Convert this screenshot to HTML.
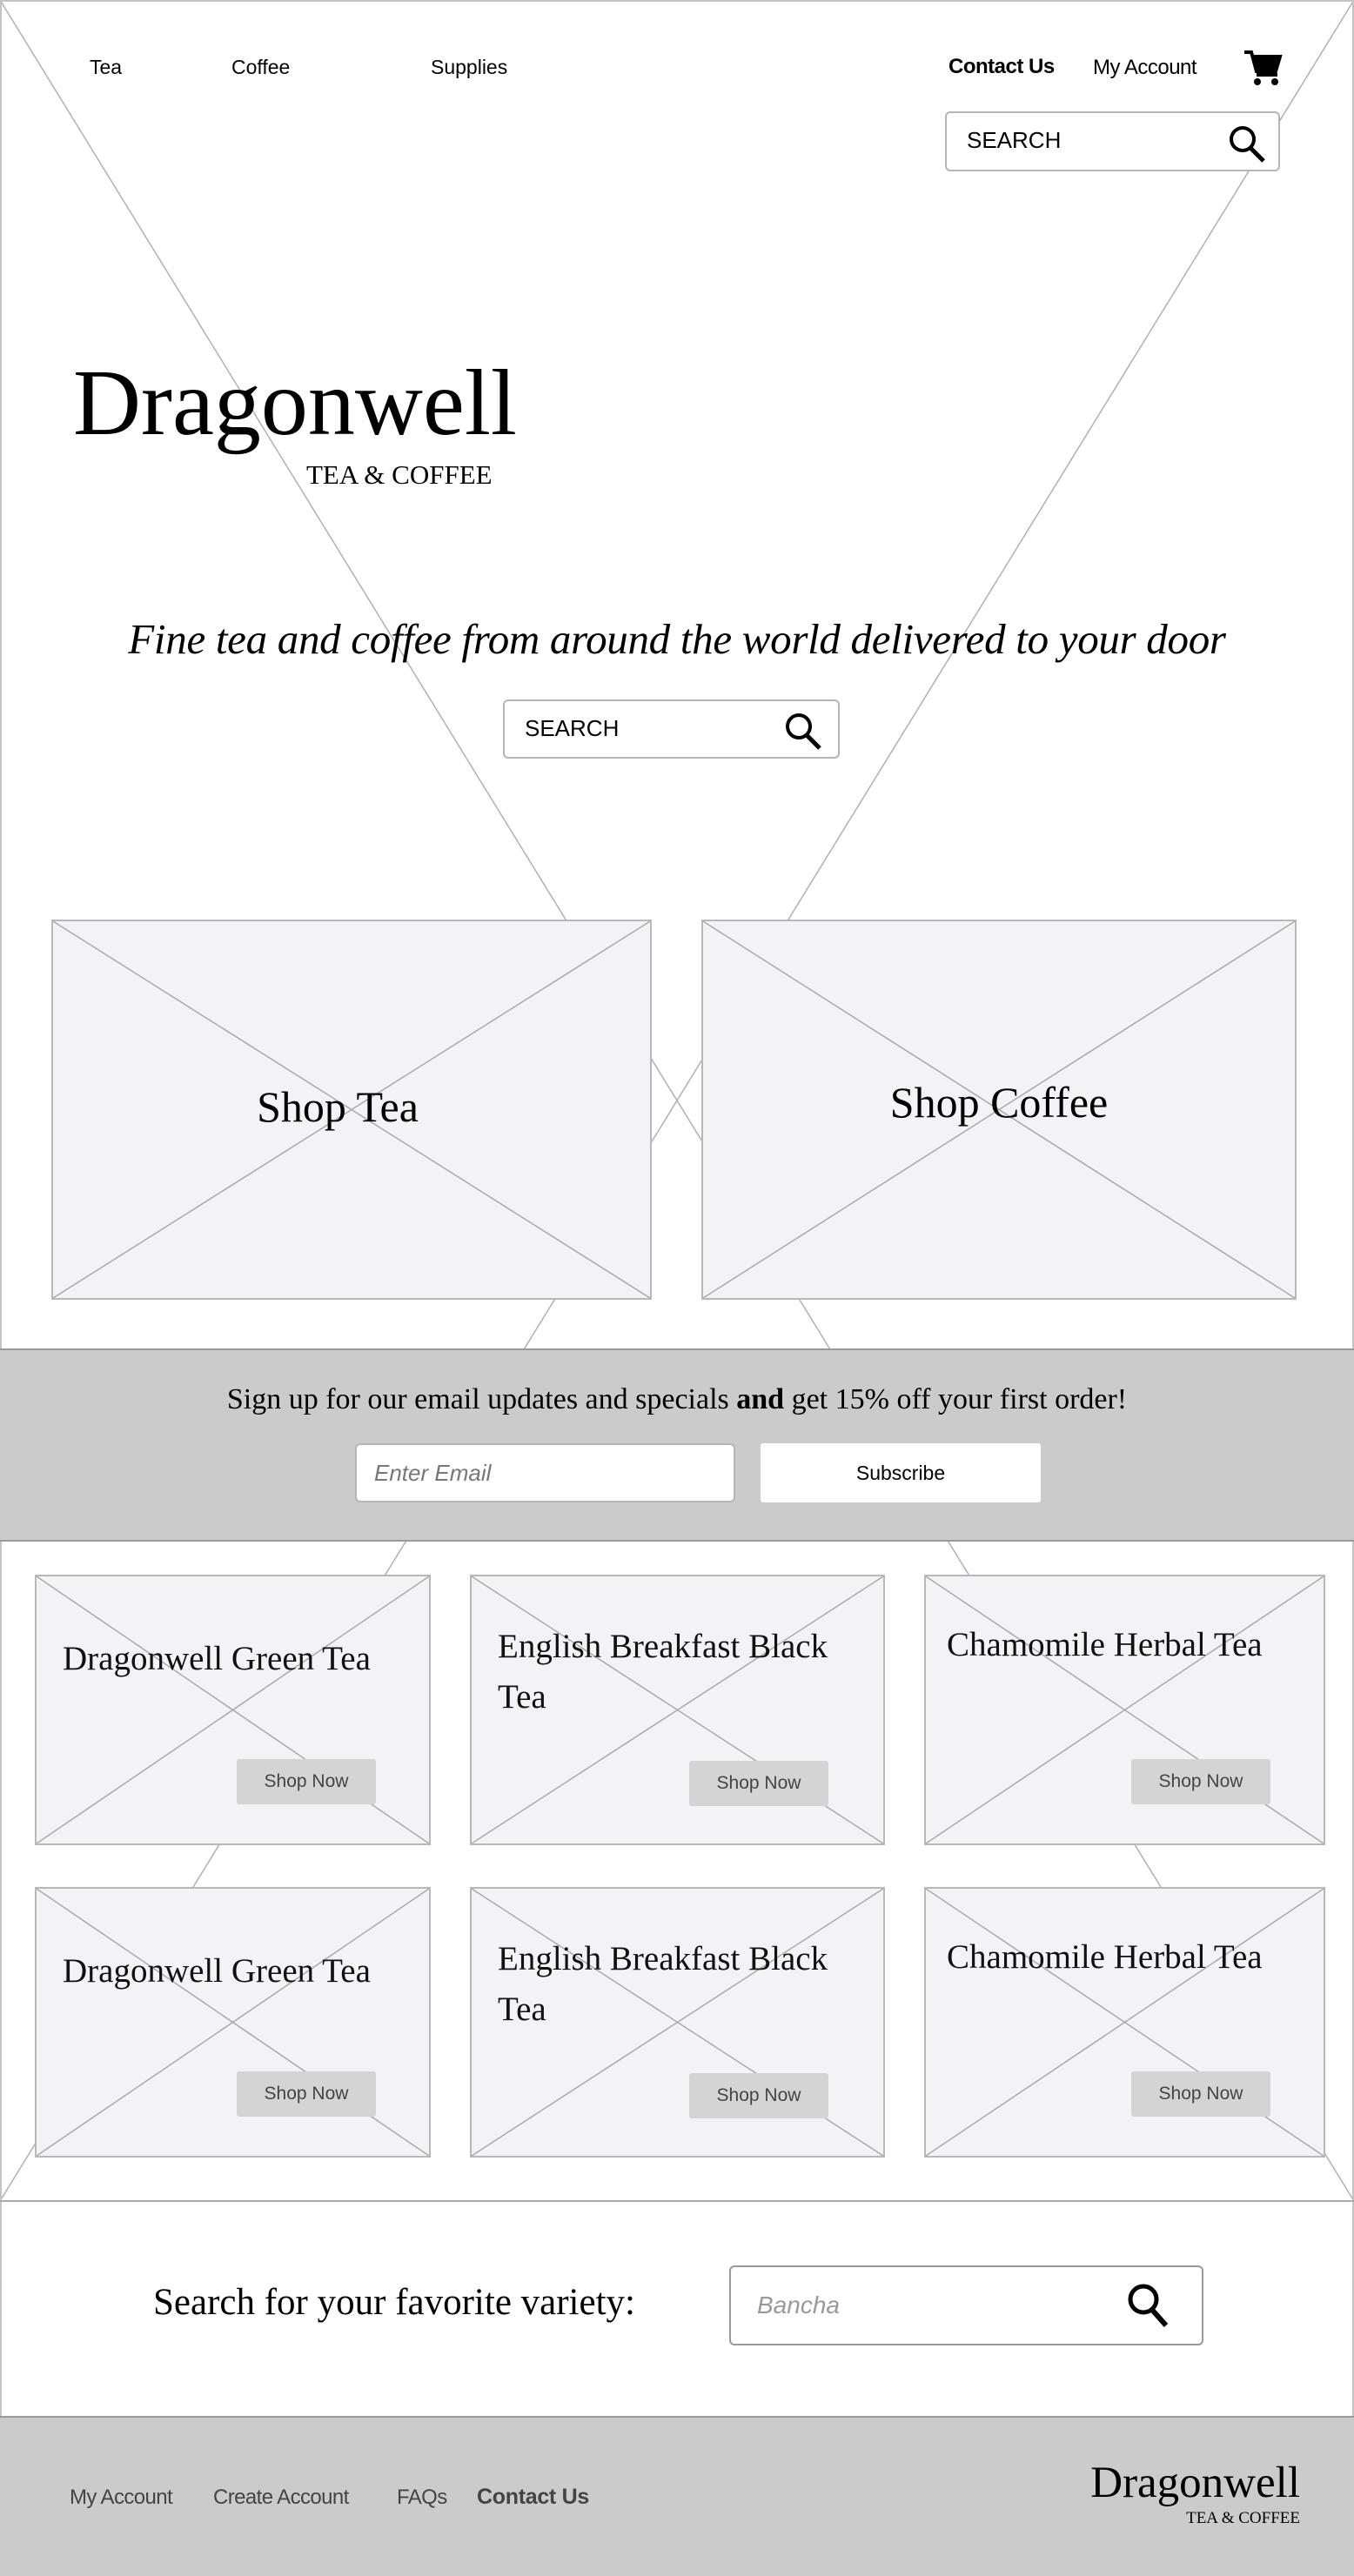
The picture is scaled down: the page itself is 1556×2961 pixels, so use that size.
<!DOCTYPE html>
<html><head><meta charset="utf-8"><style>
*{margin:0;padding:0;box-sizing:border-box}
body{width:1556px;height:2961px;position:relative;background:#fff;overflow:hidden;font-family:"Liberation Sans",sans-serif}
.a{position:absolute;white-space:nowrap}
.serif{font-family:"Liberation Serif",serif}
.img{position:absolute;background:#f3f3f5;border:2px solid #b8b8b8}
.img svg{position:absolute;left:0;top:0;width:100%;height:100%}
.box{position:absolute;background:#fff;border:2px solid #b5b5b5;border-radius:6px}
.btn{position:absolute;background:#d4d4d4;border-radius:3px;color:#444;font-size:21px;text-align:center;line-height:52px}
.title{position:absolute;left:30px;font-size:39px;line-height:58px;color:#111;font-family:"Liberation Serif",serif;white-space:normal}
</style></head><body>
<svg class="a" style="left:0;top:0" width="1556" height="2961">
<line x1="0" y1="0" x2="1556" y2="2530" stroke="#b0b0b0" stroke-width="1.5"/>
<line x1="1556" y1="0" x2="0" y2="2530" stroke="#b0b0b0" stroke-width="1.5"/>
<rect x="1" y="1" width="1554" height="2959" fill="none" stroke="#c4c4c4" stroke-width="2"/>
<line x1="0" y1="2530" x2="1556" y2="2530" stroke="#aaa" stroke-width="2"/>
</svg>

<div class="a" style="left:103px;top:64px;font-size:23px">Tea</div>
<div class="a" style="left:266px;top:64px;font-size:23px">Coffee</div>
<div class="a" style="left:495px;top:64px;font-size:23px">Supplies</div>
<div class="a" style="left:1090px;top:63px;font-size:24px;font-weight:bold;letter-spacing:-0.5px">Contact Us</div>
<div class="a" style="left:1256px;top:64px;font-size:24px;letter-spacing:-0.5px">My Account</div>
<svg class="a" style="left:1428px;top:56px" width="46" height="44" viewBox="0 0 46 44">
<path d="M2 4h8l6 22h22l5-17H12" fill="none" stroke="#000" stroke-width="4"/>
<path d="M12 9h31l-5 17H16z" fill="#000"/>
<path d="M16 30h24" stroke="#000" stroke-width="4"/>
<circle cx="17" cy="38" r="4" fill="#000"/><circle cx="37" cy="38" r="4" fill="#000"/>
</svg>

<div class="box" style="left:1086px;top:128px;width:385px;height:69px"></div>
<div class="a" style="left:1111px;top:146px;font-size:26px">SEARCH</div>
<svg class="a" style="left:1408px;top:140px" width="50" height="50"><circle cx="20" cy="20" r="13" fill="none" stroke="#000" stroke-width="4"/><line x1="29" y1="30" x2="44" y2="45" stroke="#000" stroke-width="5"/></svg>

<div class="a serif" style="left:84px;top:404px;font-size:108px;line-height:120px">Dragonwell</div>
<div class="a serif" style="left:352px;top:528px;font-size:31px">TEA &amp; COFFEE</div>

<div class="a serif" style="left:0;width:1556px;text-align:center;top:706px;font-size:49px;font-style:italic;letter-spacing:-0.3px">Fine tea and coffee from around the world delivered to your door</div>

<div class="box" style="left:578px;top:804px;width:387px;height:68px"></div>
<div class="a" style="left:603px;top:822px;font-size:26px">SEARCH</div>
<svg class="a" style="left:898px;top:815px" width="50" height="50"><circle cx="20" cy="20" r="13" fill="none" stroke="#000" stroke-width="4"/><line x1="29" y1="30" x2="44" y2="45" stroke="#000" stroke-width="5"/></svg>

<div class="img" style="left:59px;top:1057px;width:690px;height:437px"><svg viewBox="0 0 100 100" preserveAspectRatio="none"><line x1="0" y1="0" x2="100" y2="100" stroke="#aaa" stroke-width="1.5" vector-effect="non-scaling-stroke"/><line x1="100" y1="0" x2="0" y2="100" stroke="#aaa" stroke-width="1.5" vector-effect="non-scaling-stroke"/></svg></div>
<div class="a serif" style="left:59px;width:658px;text-align:center;top:1243px;font-size:50px">Shop Tea</div>
<div class="img" style="left:806px;top:1057px;width:684px;height:437px"><svg viewBox="0 0 100 100" preserveAspectRatio="none"><line x1="0" y1="0" x2="100" y2="100" stroke="#aaa" stroke-width="1.5" vector-effect="non-scaling-stroke"/><line x1="100" y1="0" x2="0" y2="100" stroke="#aaa" stroke-width="1.5" vector-effect="non-scaling-stroke"/></svg></div>
<div class="a serif" style="left:806px;width:684px;text-align:center;top:1238px;font-size:50px">Shop Coffee</div>

<div class="a" style="left:0;top:1550px;width:1556px;height:222px;background:#cbcbcb;border-top:2px solid #999;border-bottom:2px solid #999"></div>
<div class="a serif" style="left:0;width:1556px;text-align:center;top:1590px;font-size:34px">Sign up for our email updates and specials <b>and</b> get 15% off your first order!</div>
<div class="box" style="left:408px;top:1659px;width:437px;height:68px"></div>
<div class="a" style="left:430px;top:1678px;font-size:26px;font-style:italic;color:#777">Enter Email</div>
<div class="a" style="left:874px;top:1659px;width:322px;height:68px;background:#fff;border-radius:3px;text-align:center;line-height:68px;font-size:23px">Subscribe</div>

<div class="img" style="left:40px;top:1810px;width:455px;height:311px"><svg viewBox="0 0 100 100" preserveAspectRatio="none"><line x1="0" y1="0" x2="100" y2="100" stroke="#aaa" stroke-width="1.5" vector-effect="non-scaling-stroke"/><line x1="100" y1="0" x2="0" y2="100" stroke="#aaa" stroke-width="1.5" vector-effect="non-scaling-stroke"/></svg><div class="title" style="top:66px;width:420px">Dragonwell Green Tea</div><div class="btn" style="left:230px;top:210px;width:160px;height:52px">Shop Now</div></div>
<div class="img" style="left:540px;top:1810px;width:477px;height:311px"><svg viewBox="0 0 100 100" preserveAspectRatio="none"><line x1="0" y1="0" x2="100" y2="100" stroke="#aaa" stroke-width="1.5" vector-effect="non-scaling-stroke"/><line x1="100" y1="0" x2="0" y2="100" stroke="#aaa" stroke-width="1.5" vector-effect="non-scaling-stroke"/></svg><div class="title" style="top:52px;width:420px">English Breakfast Black Tea</div><div class="btn" style="left:250px;top:212px;width:160px;height:52px">Shop Now</div></div>
<div class="img" style="left:1062px;top:1810px;width:461px;height:311px"><svg viewBox="0 0 100 100" preserveAspectRatio="none"><line x1="0" y1="0" x2="100" y2="100" stroke="#aaa" stroke-width="1.5" vector-effect="non-scaling-stroke"/><line x1="100" y1="0" x2="0" y2="100" stroke="#aaa" stroke-width="1.5" vector-effect="non-scaling-stroke"/></svg><div class="title" style="top:50px;left:24px;width:440px">Chamomile Herbal Tea</div><div class="btn" style="left:236px;top:210px;width:160px;height:52px">Shop Now</div></div>

<div class="img" style="left:40px;top:2169px;width:455px;height:311px"><svg viewBox="0 0 100 100" preserveAspectRatio="none"><line x1="0" y1="0" x2="100" y2="100" stroke="#aaa" stroke-width="1.5" vector-effect="non-scaling-stroke"/><line x1="100" y1="0" x2="0" y2="100" stroke="#aaa" stroke-width="1.5" vector-effect="non-scaling-stroke"/></svg><div class="title" style="top:66px;width:420px">Dragonwell Green Tea</div><div class="btn" style="left:230px;top:210px;width:160px;height:52px">Shop Now</div></div>
<div class="img" style="left:540px;top:2169px;width:477px;height:311px"><svg viewBox="0 0 100 100" preserveAspectRatio="none"><line x1="0" y1="0" x2="100" y2="100" stroke="#aaa" stroke-width="1.5" vector-effect="non-scaling-stroke"/><line x1="100" y1="0" x2="0" y2="100" stroke="#aaa" stroke-width="1.5" vector-effect="non-scaling-stroke"/></svg><div class="title" style="top:52px;width:420px">English Breakfast Black Tea</div><div class="btn" style="left:250px;top:212px;width:160px;height:52px">Shop Now</div></div>
<div class="img" style="left:1062px;top:2169px;width:461px;height:311px"><svg viewBox="0 0 100 100" preserveAspectRatio="none"><line x1="0" y1="0" x2="100" y2="100" stroke="#aaa" stroke-width="1.5" vector-effect="non-scaling-stroke"/><line x1="100" y1="0" x2="0" y2="100" stroke="#aaa" stroke-width="1.5" vector-effect="non-scaling-stroke"/></svg><div class="title" style="top:50px;left:24px;width:440px">Chamomile Herbal Tea</div><div class="btn" style="left:236px;top:210px;width:160px;height:52px">Shop Now</div></div>

<div class="a serif" style="left:176px;top:2622px;font-size:43px">Search for your favorite variety:</div>
<div class="box" style="left:838px;top:2604px;width:545px;height:92px;border-color:#999"></div>
<div class="a" style="left:870px;top:2634px;font-size:28px;font-style:italic;color:#999">Bancha</div>
<svg class="a" style="left:1290px;top:2620px" width="60" height="60"><circle cx="24" cy="23" r="15" fill="none" stroke="#000" stroke-width="5"/><line x1="34" y1="35" x2="50" y2="53" stroke="#000" stroke-width="6"/></svg>

<div class="a" style="left:0;top:2777px;width:1556px;height:184px;background:#cbcbcb;border-top:2px solid #999"></div>
<div class="a" style="left:80px;top:2857px;font-size:24px;color:#444;letter-spacing:-0.6px">My Account</div>
<div class="a" style="left:245px;top:2857px;font-size:24px;color:#444;letter-spacing:-0.6px">Create Account</div>
<div class="a" style="left:456px;top:2857px;font-size:24px;color:#444;letter-spacing:-0.6px">FAQs</div>
<div class="a" style="left:548px;top:2856px;font-size:25px;color:#444;font-weight:bold;letter-spacing:-0.3px">Contact Us</div>
<div class="a serif" style="left:1240px;width:254px;text-align:right;top:2824px;font-size:51px;line-height:60px">Dragonwell</div>
<div class="a serif" style="left:1240px;width:254px;text-align:right;top:2884px;font-size:19px">TEA &amp; COFFEE</div>
</body></html>
